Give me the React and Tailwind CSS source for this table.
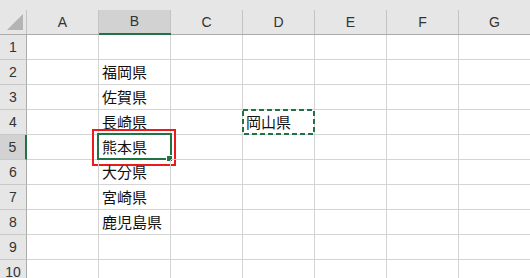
import React from 'react';

const COLS = ['A', 'B', 'C', 'D', 'E', 'F', 'G'];
const ROWS = [1, 2, 3, 4, 5, 6, 7, 8, 9, 10];

// cell values keyed by "col+row"
const DATA = {
    B2: '福岡県',
    B3: '佐賀県',
    B4: '長崎県',
    B5: '熊本県',
    B6: '大分県',
    B7: '宮崎県',
    B8: '鹿児島県',
    D4: '岡山県',
};

const ACTIVE = { col: 'B', row: 5 };
const COPY = { col: 'D', row: 4 };

const ColumnHeader = ({ label, active }) => (
    <div
        className={`w-[72px] h-[35px] shrink-0 flex flex-col ${
            active ? 'border-b-2 border-[#217346]' : 'border-b border-[#ababab]'
        }`}
    >
        <div className="h-[10px]" />
        <div
            className={`flex-1 flex items-center justify-center border-r border-[#c4c4c4] text-[14px] text-[#333] ${
                active ? 'bg-[#d2d2d2]' : ''
            }`}
        >
            {label}
        </div>
    </div>
);

const CopyMarquee = () => (
    <svg className="absolute -left-px -top-px w-[73px] h-[26px] pointer-events-none" viewBox="0 0 73 26">
        <rect x="1" y="1" width="71" height="24" fill="none" stroke="#217346" strokeWidth="2" strokeDasharray="5 3" />
    </svg>
);

const Cell = ({ id }) => {
    const value = DATA[id];
    const isActive = id === `${ACTIVE.col}${ACTIVE.row}`;
    const isCopy = id === `${COPY.col}${COPY.row}`;

    return (
        <div className="relative w-[72px] h-[25px] shrink-0 border-r border-b border-[#d4d4d4] flex items-center pl-[3px] text-[15px] text-[#111] font-['Noto_Sans_CJK_JP',sans-serif] whitespace-nowrap">
            {value}
            {isActive && (
                <>
                    <div className="absolute -left-[2px] -top-[2px] -right-[2px] -bottom-[1px] border-2 border-[#217346]" />
                    <div className="absolute -right-[3px] -bottom-[3px] w-[7px] h-[7px] bg-[#217346] border border-white" />
                    {/* annotation frame */}
                    <div className="absolute -left-[7px] -top-[6px] -right-[6px] -bottom-[7px] border-2 border-[#e81c1c]" />
                </>
            )}
            {isCopy && <CopyMarquee />}
        </div>
    );
};

export default function App() {
    return (
        <div className="w-[530px] h-[278px] overflow-hidden bg-white font-['Liberation_Sans',sans-serif]">
            {/* column headers */}
            <div className="flex bg-[#e6e6e6]">
                <div className="w-[27px] h-[35px] shrink-0 flex flex-col border-b border-[#ababab]">
                    <div className="h-[10px]" />
                    <div className="flex-1 border-r border-[#c4c4c4] relative">
                        <svg className="absolute left-[7px] top-[4px] w-[16px] h-[16px]" viewBox="0 0 16 16">
                            <polygon points="16,0 16,16 0,16" fill="#b4b4b4" />
                        </svg>
                    </div>
                </div>
                {COLS.map((c) => (
                    <ColumnHeader key={c} label={c} active={c === ACTIVE.col} />
                ))}
            </div>

            {/* rows */}
            {ROWS.map((r) => (
                <div key={r} className="flex">
                    <div
                        className={`w-[27px] h-[25px] shrink-0 flex items-center justify-center border-b border-[#c8c8c8] text-[14px] text-[#333] ${
                            r === ACTIVE.row
                                ? 'bg-[#d2d2d2] border-r-2 border-r-[#217346]'
                                : 'bg-[#e6e6e6] border-r border-r-[#ababab]'
                        }`}
                    >
                        {r}
                    </div>
                    {COLS.map((c) => (
                        <Cell key={c} id={`${c}${r}`} />
                    ))}
                </div>
            ))}
        </div>
    );
}
